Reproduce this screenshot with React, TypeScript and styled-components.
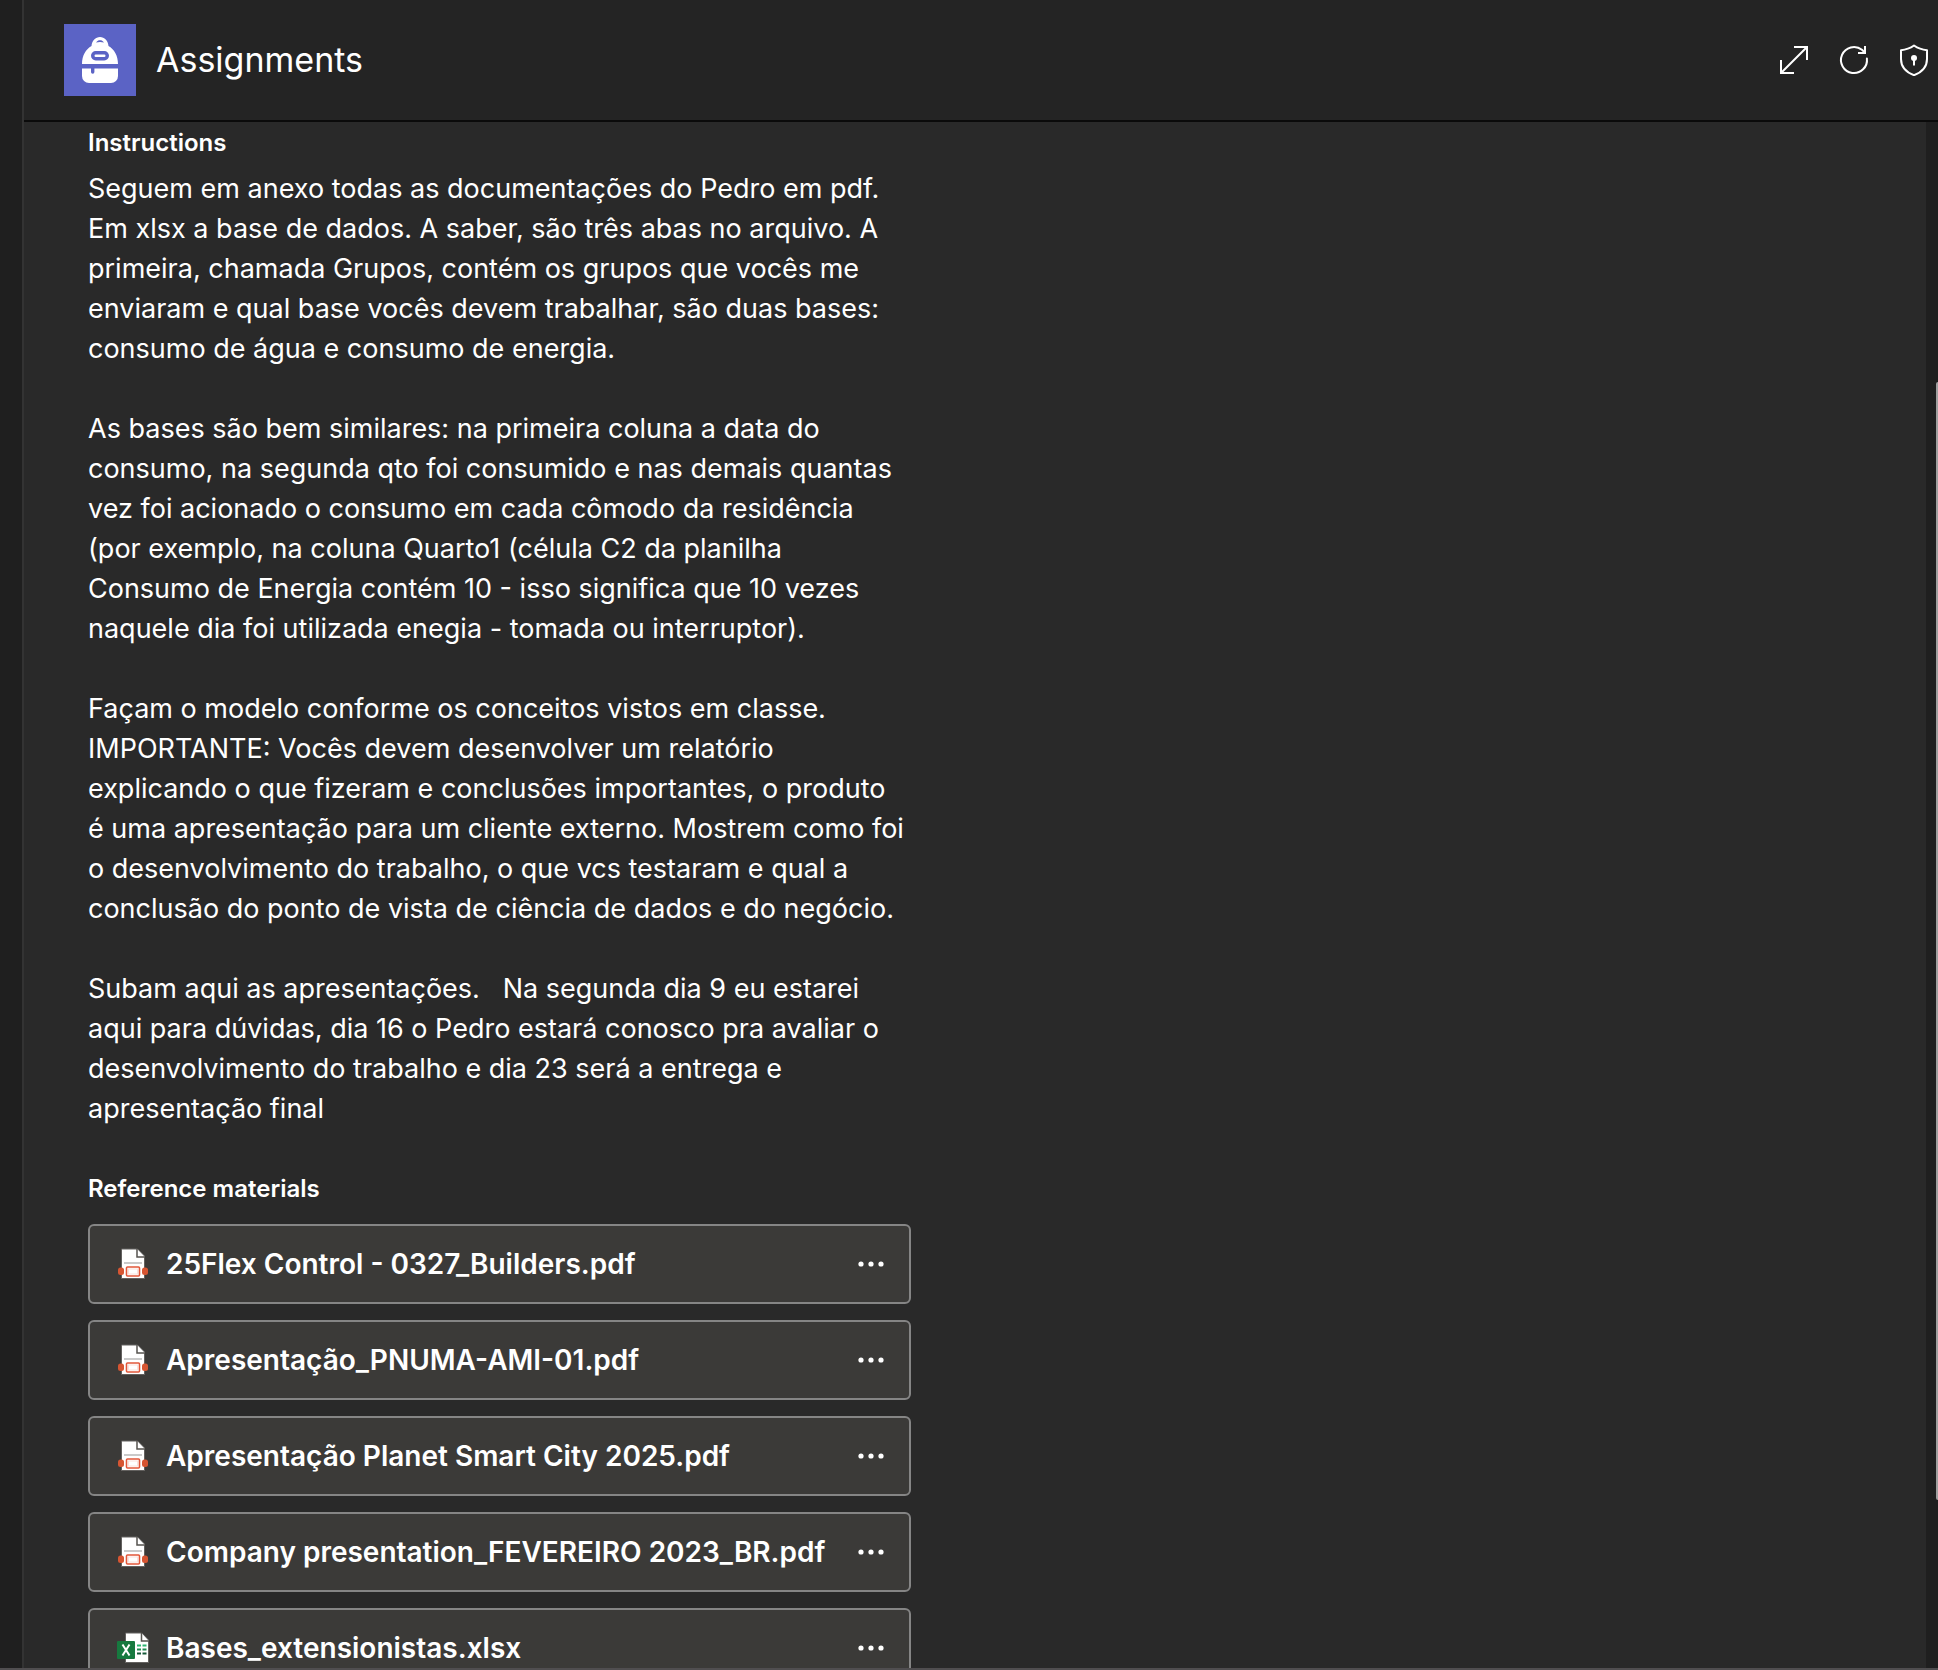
import React from "react";
import styled, { createGlobalStyle } from "styled-components";

const GlobalStyle = createGlobalStyle`
  *, *::before, *::after { box-sizing: border-box; }
  body {
    margin: 0;
    background: #292929;
    color: #ffffff;
    font-family: Inter, "Liberation Sans", sans-serif;
  }
`;

const Shell = styled.div`
  display: flex;
  height: 100vh;
  overflow: hidden;
  border-bottom: 2px solid #504e50;
`;

const Rail = styled.div`
  flex: none;
  width: 24px;
  background: #1f1f1f;
  border-right: 2px solid #333333;
`;

const Main = styled.div`
  flex: 1;
  min-width: 0;
  display: flex;
  flex-direction: column;
`;

const Header = styled.header`
  flex: none;
  display: flex;
  align-items: center;
  gap: 20px;
  height: 122px;
  padding: 0 8px 0 40px;
  background: #242424;
  border-bottom: 2px solid #0a0a0a;
`;

const Title = styled.h1`
  flex: 1;
  margin: 0;
  font-size: 34px;
  line-height: 48px;
  font-weight: 400;
`;

const Tools = styled.div`
  display: flex;
  gap: 28px;
`;

const IconButton = styled.button`
  display: flex;
  align-items: center;
  justify-content: center;
  padding: 0;
  border: 0;
  background: none;
  color: #ffffff;
  cursor: pointer;
`;

const Body = styled.div`
  flex: 1;
  min-height: 0;
  display: flex;
`;

const Content = styled.main`
  flex: 1;
  min-width: 0;
  overflow: hidden;
  padding: 5px 64px 0;
  background: #292929;
`;

const Column = styled.div`
  max-width: 823px;
`;

const SectionTitle = styled.h2`
  margin: 0;
  font-size: 24px;
  line-height: 32px;
  font-weight: 600;
`;

const Instructions = styled.div`
  display: flex;
  flex-direction: column;
  gap: 40px;
  margin: 10px 0 44px;
`;

const Paragraph = styled.p`
  margin: 0;
  font-size: 27px;
  line-height: 40px;
  white-space: pre;
`;

const FileList = styled.ul`
  display: flex;
  flex-direction: column;
  gap: 16px;
  margin: 19px 0 0;
  padding: 0;
  list-style: none;
`;

const FileRow = styled.li`
  display: flex;
  align-items: center;
  gap: 17px;
  height: 80px;
  padding: 0 22px 0 27px;
  background: #3b3a38;
  border: 2px solid #858585;
  border-radius: 6px;
`;

const FileLink = styled.a`
  flex: 1;
  min-width: 0;
  color: inherit;
  font-size: 28px;
  line-height: 40px;
  font-weight: 600;
  text-decoration: none;
  white-space: nowrap;
`;

const Gutter = styled.div`
  flex: none;
  display: flex;
  justify-content: flex-end;
  width: 12px;
  padding: 260px 0 168px;
  background: #1f1f1f;
`;

const Thumb = styled.div`
  width: 2px;
  background: #9f9f9f;
  border-radius: 2px 0 0 2px;
`;

const BackpackLogo = () => (
  <svg width="72" height="72" viewBox="0 0 72 72" aria-hidden="true">
    <rect width="72" height="72" fill="#5b63c5" />
    <path
      d="M27.500 22C28 16.500 31.500 13 36 13s8 3.500 8.500 9C50 25 54 31.500 54 40H18c0-8.500 4-15 9.500-18Z"
      fill="#fff"
    />
    <path d="M32 18.600c1.200-1.800 2.500-2.400 4-2.400s2.800.6 4 2.400c-2.600-.7-5.400-.7-8 0Z" fill="#5b63c5" />
    <rect x="27" y="27" width="18" height="9.400" rx="4.700" fill="#5b63c5" />
    <rect x="30.500" y="30.500" width="11" height="2.400" rx="1.200" fill="#fff" />
    <path d="M18 44.500h36V52a7 7 0 0 1-7 7H25a7 7 0 0 1-7-7Z" fill="#fff" />
    <path d="M27 44h3.400v4a1.700 1.700 0 0 1-3.400 0Z" fill="#5b63c5" />
  </svg>
);

const ExpandIcon = () => (
  <svg width="32" height="32" viewBox="0 0 32 32" fill="none" stroke="currentColor" strokeWidth="2" aria-hidden="true">
    <path d="M16 3h13v13M3 16v13h13M29 3 3 29" />
  </svg>
);

const RefreshIcon = () => (
  <svg width="32" height="32" viewBox="0 0 32 32" fill="none" stroke="currentColor" strokeWidth="2" aria-hidden="true">
    <path d="M28.900 14.500A13 13 0 1 1 24 5.800l2.500 2.400" strokeLinecap="round" />
    <path d="M27 2v7h-7" />
  </svg>
);

const ShieldIcon = () => (
  <svg width="32" height="32" viewBox="0 0 32 32" fill="none" stroke="currentColor" strokeWidth="2" aria-hidden="true">
    <path
      d="M16 1.500c4 2.900 8 4.300 13 4.700V15c0 8-4.500 13-13 16.200C7.500 28 3 23 3 15V6.200c5-.4 9-1.800 13-4.700Z"
      strokeLinejoin="round"
    />
    <circle cx="16" cy="14" r="3" fill="currentColor" stroke="none" />
    <path d="M16 15v6.500" />
  </svg>
);

const PdfIcon = () => (
  <svg width="32" height="32" viewBox="0 0 32 32" aria-hidden="true">
    <path d="M4.500 1h16l7 7v22.500h-23Z" fill="#fff" stroke="#63615f" strokeWidth="1" />
    <path d="M20 1v8h7.500" fill="#fff" stroke="#55534f" strokeWidth="1.500" />
    <path d="M7 15h18" stroke="#b9b9b9" strokeWidth="1.500" />
    <rect x="1" y="19.500" width="6" height="7.500" rx="2.500" fill="#d65532" />
    <rect x="25" y="19.500" width="6" height="7.500" rx="2.500" fill="#d65532" />
    <rect x="9.500" y="19" width="13" height="9" rx="1" fill="#fff" stroke="#e2573a" strokeWidth="1.600" />
    <rect x="11.500" y="21" width="9" height="5" fill="none" stroke="#fbe2dc" strokeWidth="1" />
  </svg>
);

const ExcelIcon = () => (
  <svg width="32" height="32" viewBox="0 0 32 32" aria-hidden="true">
    <path d="M8.500 1h16l7 7v22.500h-23Z" fill="#fff" stroke="#63615f" strokeWidth="1" />
    <path d="M24.500 1v8h7" fill="#fff" stroke="#55534f" strokeWidth="1.500" />
    <path d="M20 13.500h4m1.500 0h4" stroke="#2fb673" strokeWidth="2" />
    <path d="M20 17.500h4m1.500 0h4" stroke="#1f8a50" strokeWidth="2" />
    <path d="M20 21.500h4m1.500 0h4" stroke="#17593a" strokeWidth="2" />
    <rect x="0" y="9" width="18" height="18" rx="1" fill="#16793f" />
    <path d="m5.500 12.500 7 11m0-11-7 11" stroke="#fff" strokeWidth="2" />
  </svg>
);

const MoreIcon = () => (
  <svg width="32" height="32" viewBox="0 0 32 32" fill="currentColor" aria-hidden="true">
    <circle cx="6" cy="16" r="2.600" />
    <circle cx="16" cy="16" r="2.600" />
    <circle cx="26" cy="16" r="2.600" />
  </svg>
);

const paragraphs = [
  `Seguem em anexo todas as documentações do Pedro em pdf.
Em xlsx a base de dados. A saber, são três abas no arquivo. A
primeira, chamada Grupos, contém os grupos que vocês me
enviaram e qual base vocês devem trabalhar, são duas bases:
consumo de água e consumo de energia.`,
  `As bases são bem similares: na primeira coluna a data do
consumo, na segunda qto foi consumido e nas demais quantas
vez foi acionado o consumo em cada cômodo da residência
(por exemplo, na coluna Quarto1 (célula C2 da planilha
Consumo de Energia contém 10 - isso significa que 10 vezes
naquele dia foi utilizada enegia - tomada ou interruptor).`,
  `Façam o modelo conforme os conceitos vistos em classe.
IMPORTANTE: Vocês devem desenvolver um relatório
explicando o que fizeram e conclusões importantes, o produto
é uma apresentação para um cliente externo. Mostrem como foi
o desenvolvimento do trabalho, o que vcs testaram e qual a
conclusão do ponto de vista de ciência de dados e do negócio.`,
  `Subam aqui as apresentações.   Na segunda dia 9 eu estarei
aqui para dúvidas, dia 16 o Pedro estará conosco pra avaliar o
desenvolvimento do trabalho e dia 23 será a entrega e
apresentação final`,
];

type FileKind = "pdf" | "xlsx";

const files: { name: string; kind: FileKind }[] = [
  { name: "25Flex Control - 0327_Builders.pdf", kind: "pdf" },
  { name: "Apresentação_PNUMA-AMI-01.pdf", kind: "pdf" },
  { name: "Apresentação Planet Smart City 2025.pdf", kind: "pdf" },
  { name: "Company presentation_FEVEREIRO 2023_BR.pdf", kind: "pdf" },
  { name: "Bases_extensionistas.xlsx", kind: "xlsx" },
];

export default function App() {
  return (
    <>
      <GlobalStyle />
      <Shell>
        <Rail />
        <Main>
          <Header>
            <BackpackLogo />
            <Title>Assignments</Title>
            <Tools>
              <IconButton aria-label="Expand"><ExpandIcon /></IconButton>
              <IconButton aria-label="Refresh"><RefreshIcon /></IconButton>
              <IconButton aria-label="Privacy"><ShieldIcon /></IconButton>
            </Tools>
          </Header>
          <Body>
            <Content>
              <Column>
                <SectionTitle>Instructions</SectionTitle>
                <Instructions>
                  {paragraphs.map((text) => (
                    <Paragraph key={text}>{text}</Paragraph>
                  ))}
                </Instructions>
                <SectionTitle>Reference materials</SectionTitle>
                <FileList>
                  {files.map((file) => (
                    <FileRow key={file.name}>
                      {file.kind === "pdf" ? <PdfIcon /> : <ExcelIcon />}
                      <FileLink href="#">{file.name}</FileLink>
                      <IconButton aria-label={`More options for ${file.name}`}><MoreIcon /></IconButton>
                    </FileRow>
                  ))}
                </FileList>
              </Column>
            </Content>
            <Gutter><Thumb /></Gutter>
          </Body>
        </Main>
      </Shell>
    </>
  );
}
